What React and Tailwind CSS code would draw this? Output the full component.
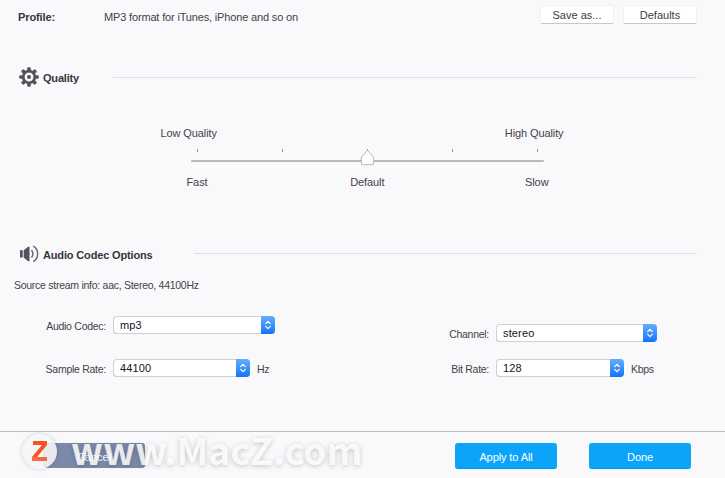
function GearIcon() {
  const teeth = [0, 45, 90, 135, 180, 225, 270, 315];
  return (
    <svg className="h-5 w-5 shrink-0" viewBox="0 0 20 20" fill="#50525f">
      {teeth.map((a) => (
        <rect key={a} x="8.2" y="0.2" width="3.6" height="5" rx="1.2" transform={`rotate(${a} 10 10)`} />
      ))}
      <circle cx="10" cy="10" r="5.8" fill="none" stroke="#50525f" strokeWidth="2.7" />
      <circle cx="10" cy="10" r="2" />
    </svg>
  );
}

function SpeakerIcon() {
  return (
    <svg className="h-[18px] w-5 shrink-0" viewBox="0 0 20 18">
      <path d="M0 5.2h2.7v7.4H0zM3.7 5.2 7.9 2Q9.5 1 9.5 2.6v12.8q0 1.5-1.6.5L3.7 12.6z" fill="#50525f" />
      <path d="M11.5 5.2q2.8 3.7 0 7.4M13.3 1.2c5.8 3.3 5.8 12 0 15.4" fill="none" stroke="#62646f" strokeWidth="1.4" />
    </svg>
  );
}

function SmallButton({ children }) {
  return (
    <button className="h-[19px] w-[74px] rounded-[2px] border border-b-[#c8c8cb] border-[#f0f0f2] bg-white text-[11px] leading-[18px] text-[#3c3c3f]">
      {children}
    </button>
  );
}

function Select({ value, width }) {
  return (
    <div className={`${width} flex h-[18px] overflow-hidden rounded-[4px] bg-white shadow-[inset_0_0_0_1px_#d0d0d3,inset_0_-1px_0_#bdbdc0]`}>
      <span className="flex-1 pt-px pl-[7px] text-[11px] leading-[17px] tracking-[0.15px] text-[#151515]">{value}</span>
      <span className="flex w-[14px] items-center justify-center bg-linear-to-b from-[#65adfc] to-[#0b74fb]">
        <svg className="h-[10px] w-2" viewBox="0 0 8 10" fill="none" stroke="white" strokeWidth="1.2" strokeLinecap="round" strokeLinejoin="round">
          <path d="M1.7 3.6 4 1.3l2.3 2.3M1.7 6.4 4 8.7l2.3-2.3" />
        </svg>
      </span>
    </div>
  );
}

function Field({ label, value, width, unit, labelWidth }) {
  return (
    <div className="flex h-[18px] text-[10.5px] tracking-[-0.27px]">
      <span className={`${labelWidth} pt-[3px] pr-[7px] text-right leading-[14px]`}>{label}</span>
      <Select value={value} width={width} />
      {unit && <span className="pt-[3px] pl-[7px] leading-[14px]">{unit}</span>}
    </div>
  );
}

function Slider() {
  return (
    <div className="mx-auto h-[76px] w-[408px] -translate-x-px tracking-[-0.1px]">
      <div className="flex h-[20px] justify-between pr-[2px] pl-[3px] leading-[14px]">
        <span>Low Quality</span>
        <span>High Quality</span>
      </div>
      <div className="relative ml-[33px] h-[20px] w-[353px]">
        <div className="flex justify-between pt-[3px] pr-[6px] pl-[6px]">
          <i className="h-[3px] w-px bg-[#96969b]" />
          <i className="h-[3px] w-px bg-[#96969b]" />
          <i className="h-[3px] w-px bg-[#96969b]" />
          <i className="h-[3px] w-px bg-[#96969b]" />
          <i className="h-[3px] w-px bg-[#96969b]" />
        </div>
        <div className="mt-[8px] h-[2px] rounded-full bg-[#b9b9bc]" />
        <svg className="absolute top-[3px] left-[169px] h-[17px] w-[15px]" viewBox="0 0 15 17">
          <path d="M7.5 1.5Q8 1.5 9 3l4.6 5.2v5.7q0 1.8-1.8 1.8H3.2q-1.8 0-1.8-1.8V8.2L6 3q1-1.5 1.5-1.5z" fill="white" stroke="#b4b4b7" strokeWidth="1" />
        </svg>
      </div>
      <div className="mt-[9px] flex h-[14px] justify-between pr-[17px] pl-[29px] leading-[14px]">
        <span>Fast</span>
        <span className="pl-[2px]">Default</span>
        <span>Slow</span>
      </div>
    </div>
  );
}

function Watermark() {
  return (
    <div className="absolute top-[433px] left-[22px] flex h-[36px] items-center">
      <span className="flex h-[35px] w-[35px] items-center justify-center rounded-full bg-[#f4f5f6]/90 shadow-[0_0_4px_rgba(0,0,0,0.18)]">
        <svg className="h-5 w-4" viewBox="0 0 16 20">
          <path d="M1 0h14v4L5 16H0L10 4H1z" fill="#fb5022" />
          <path d="M0 16h15v4H0z" fill="#fa6941" />
        </svg>
      </span>
      <span className="ml-[14px] -translate-y-[2px] whitespace-nowrap font-['Noto_Sans_CJK_SC',sans-serif] text-[37px] leading-[36px] font-bold tracking-[0.2px] text-white/85 [text-shadow:0_1px_5px_rgba(0,0,0,0.22)]">
        www.MacZ.com
      </span>
    </div>
  );
}

export default function App() {
  return (
    <div className="relative flex h-[478px] w-[725px] flex-col overflow-hidden bg-[#f9f9fb] font-['Liberation_Sans',Arial,sans-serif] text-[11px] text-[#424249]">
      <header className="flex h-[67px] pt-[5px] pr-[28px] pl-[18px]">
        <strong className="w-[86px] pt-[5px] leading-[14px] tracking-[-0.1px] text-[#35353d]">Profile:</strong>
        <span className="flex-1 pt-[5px] leading-[14px] tracking-[-0.16px]">MP3 format for iTunes, iPhone and so on</span>
        <div className="flex gap-[9px]">
          <SmallButton>Save as...</SmallButton>
          <SmallButton>Defaults</SmallButton>
        </div>
      </header>
      <section className="h-[177px]">
        <div className="flex h-[20px] items-center pr-[28px] pl-[19px]">
          <GearIcon />
          <h2 className="ml-[4px] w-[70px] pt-[2px] leading-[14px] font-bold tracking-[-0.2px] text-[#35353d]">Quality</h2>
          <div className="mt-px h-px flex-1 bg-[#e0e0e4]" />
        </div>
        <div className="pt-[39px]">
          <Slider />
        </div>
      </section>
      <section className="h-[187px]">
        <div className="flex h-[19px] items-center pr-[28px] pl-[20px]">
          <SpeakerIcon />
          <h2 className="ml-[3px] w-[151px] pt-[2px] leading-[14px] font-bold tracking-[-0.15px] text-[#35353d]">Audio Codec Options</h2>
          <div className="h-px flex-1 bg-[#e0e0e4]" />
        </div>
        <p className="mt-[15px] pl-[14px] text-[10.5px] leading-[14px] tracking-[-0.27px]">Source stream info: aac, Stereo, 44100Hz</p>
        <div className="mt-[24px] flex">
          <div className="flex w-[383px] flex-col gap-[25px]">
            <Field label="Audio Codec:" value="mp3" width="w-[162px]" labelWidth="w-[113px]" />
            <Field label="Sample Rate:" value="44100" width="w-[137px]" labelWidth="w-[113px]" unit="Hz" />
          </div>
          <div className="flex flex-col gap-[17px] pt-[8px]">
            <Field label="Channel:" value="stereo" width="w-[161px]" labelWidth="w-[113px]" />
            <Field label="Bit Rate:" value="128" width="w-[128px]" labelWidth="w-[113px]" unit="Kbps" />
          </div>
        </div>
      </section>
      <footer className="flex h-[47px] border-t border-[#bebec1] pt-[11px] pr-[34px] pl-[43px] text-white">
        <button className="h-[25px] w-[102px] rounded-[3px] bg-[#7c89a9] pt-[3px]">Cancel</button>
        <button className="ml-auto h-[26px] w-[102px] rounded-[3px] border-b border-[#0992eb] bg-[#0ca4fa] pt-[3px] text-[11px] tracking-[-0.1px]">Apply to All</button>
        <button className="ml-[32px] h-[26px] w-[102px] rounded-[3px] border-b border-[#0992eb] bg-[#0ca4fa] pt-[3px] text-[11px] tracking-[-0.1px]">Done</button>
      </footer>
      <Watermark />
    </div>
  );
}
